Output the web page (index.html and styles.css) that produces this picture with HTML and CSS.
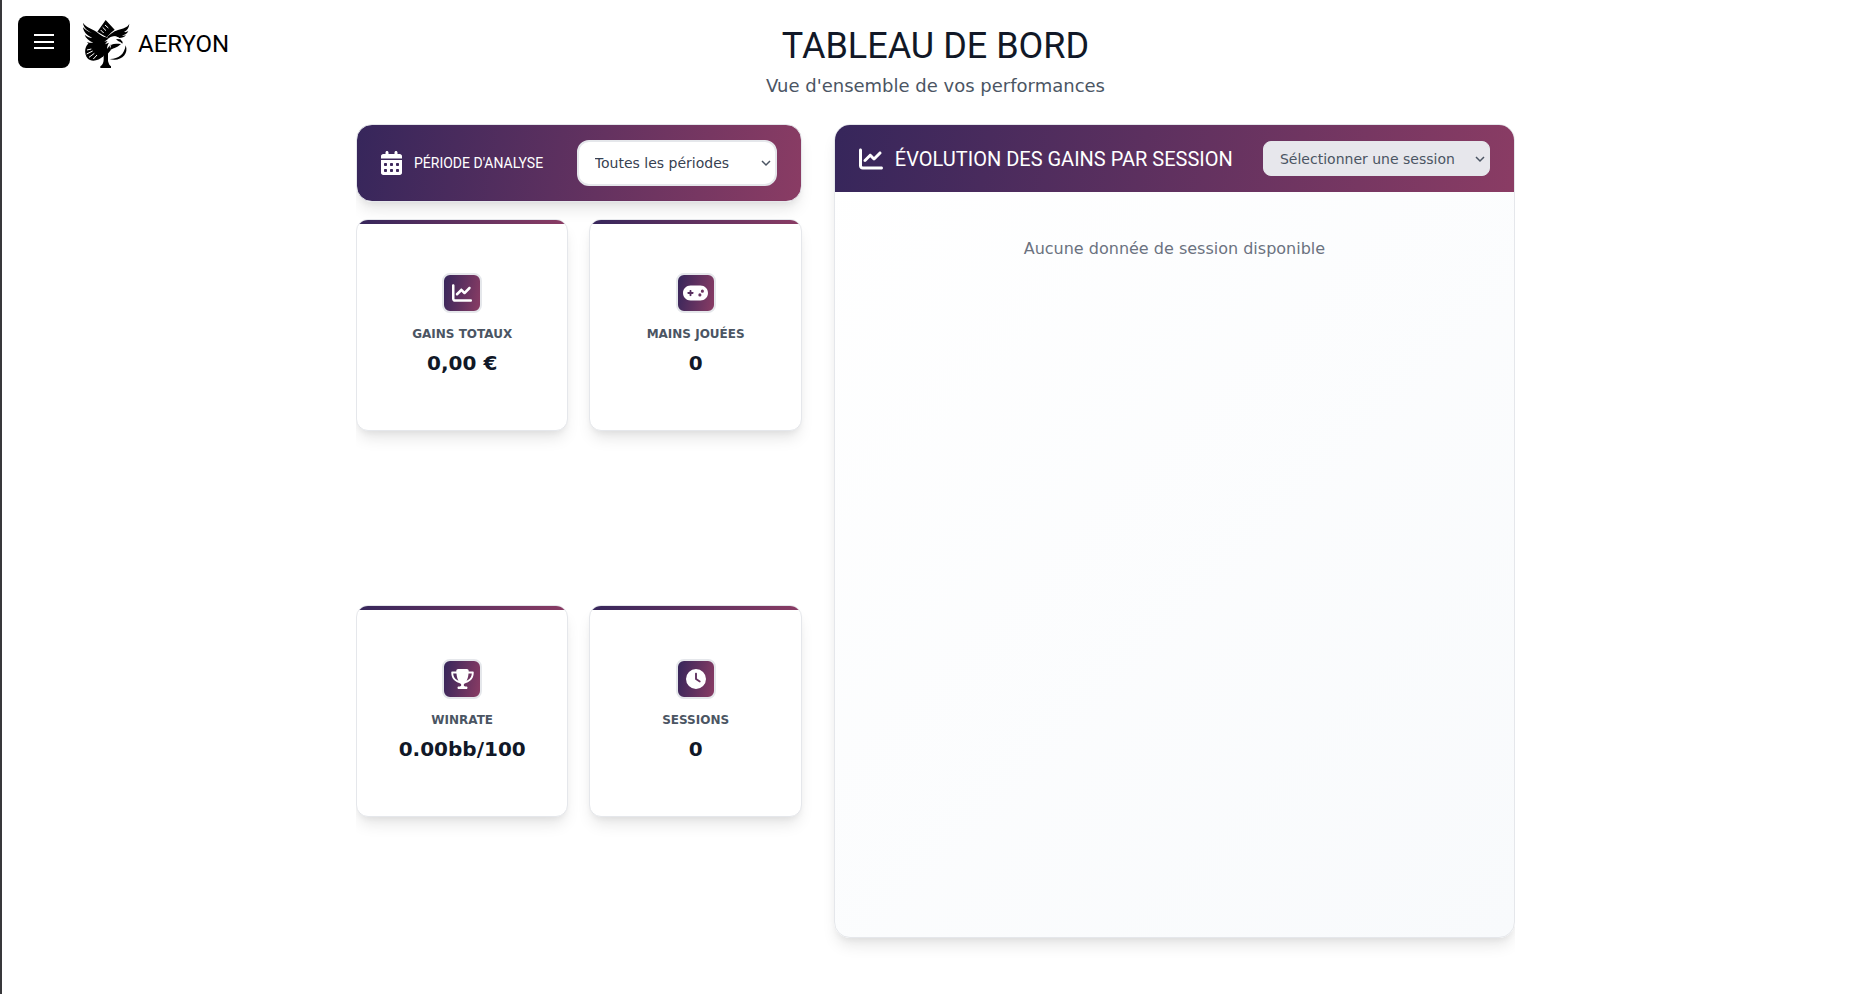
FILE: index.html
```html
<!DOCTYPE html>
<html lang="fr">
<head>
    <meta charset="UTF-8">
    <meta name="viewport" content="width=device-width, initial-scale=1.0">
    <title>Aeryon - Tableau de bord</title>
    <link rel="stylesheet" href="styles.css">
</head>
<body>
    <!-- Shared icons -->
    <svg class="sprite" aria-hidden="true">
        <symbol id="icon-chart" viewBox="0 0 512 512">
            <path d="M64 64c0-17.700-14.300-32-32-32S0 46.300 0 64V400c0 44.200 35.800 80 80 80H480c17.700 0 32-14.300 32-32s-14.300-32-32-32H80c-8.800 0-16-7.200-16-16V64zm406.600 86.600c12.500-12.500 12.500-32.800 0-45.300s-32.800-12.500-45.300 0L320 210.700l-57.400-57.400c-12.500-12.500-32.800-12.500-45.300 0l-112 112c-12.500 12.500-12.500 32.800 0 45.300s32.800 12.500 45.300 0L240 221.300l57.400 57.400c12.500 12.500 32.800 12.500 45.300 0l128-128z"/>
        </symbol>
    </svg>

    <header class="topbar">
        <div class="brand">
            <button class="menu-button" type="button" aria-label="Ouvrir le menu">
                <svg width="24" height="24" viewBox="0 0 24 24" aria-hidden="true">
                    <path d="M2 5h20M2 12h20M2 18h20" fill="none" stroke="#fff" stroke-width="2"/>
                </svg>
            </button>
            <a class="brand-link" href="#">
                <svg class="brand-logo" viewBox="248 60 142 144" aria-hidden="true">
                    <!-- card -->
                    <path d="M318 60L345 89L334 98L321 112L293 95Z"/>
                    <!-- left wing and body -->
                    <path d="M250 68C257 81 276 85 291 96C302 104 309 111 319 112L340 122L330 140L333 151L322 164L296 160L279 146L262 126C270 129 276 129 281 128C268 122 258 114 255 104C263 111 271 113 278 114C261 106 251 95 250 82C258 91 266 96 277 99C260 90 251 81 250 68Z"/>
                    <!-- right wing -->
                    <path d="M321 112C330 104 341 94 355 90C369 85 384 83 389 71C388 84 382 92 373 96C378 97 382 96 386 93C382 102 374 105 367 106C371 108 375 107 379 105C374 112 367 114 359 114C350 107 336 107 327 115Z"/>
                    <!-- left lobe of the spade -->
                    <path d="M268 130C254 139 253 162 263 174C274 187 296 183 311 169L320 157L292 135Z"/>
                    <!-- right lobe -->
                    <path d="M378 136C389 165 360 187 329 177C355 178 374 165 378 136Z"/>
                    <path d="M329 152C337 145 352 144 364 132C352 131 344 130 335 134Z"/>
                    <!-- foot -->
                    <path d="M312 155H325V183C327 191 330 197 334 199V204H302V199C308 195 312 188 312 179Z"/>
                    <!-- head -->
                    <path d="M325 117C337 107 352 107 360 116L370 124L366 128L357 126L348 128C337 128 330 136 322 147C322 139 325 133 328 128L316 133L324 123L314 125Z" fill="#fff"/>
                    <path d="M349 117L362 118L369 126L368 131L362 126L355 123Z"/>
                    <!-- feather and card lines -->
                    <path d="M316 75L326 84M309 82L319 92M303 90L312 99M262 150L275 147M261 162L279 153M268 172L284 160M281 177L292 165" fill="none" stroke="#fff" stroke-width="3"/>
                </svg>
                <span class="brand-name">AERYON</span>
            </a>
        </div>
        <div class="page-heading">
            <h1>TABLEAU DE BORD</h1>
            <p>Vue d'ensemble de vos performances</p>
        </div>
    </header>

    <main class="dashboard">
        <section class="overview">
            <div class="period-bar">
                <svg class="period-icon" viewBox="0 0 448 512" aria-hidden="true">
                    <path d="M128 0c17.700 0 32 14.300 32 32V64H288V32c0-17.700 14.300-32 32-32s32 14.300 32 32V64h48c26.500 0 48 21.500 48 48v48H0V112C0 85.500 21.500 64 48 64H96V32c0-17.700 14.300-32 32-32zM0 192H448V464c0 26.500-21.500 48-48 48H48c-26.500 0-48-21.500-48-48V192zm64 80v32c0 8.800 7.200 16 16 16h32c8.800 0 16-7.200 16-16V272c0-8.800-7.200-16-16-16H80c-8.800 0-16 7.200-16 16zm128 0v32c0 8.800 7.200 16 16 16h32c8.800 0 16-7.200 16-16V272c0-8.800-7.200-16-16-16H208c-8.800 0-16 7.200-16 16zm144-16c-8.800 0-16 7.200-16 16v32c0 8.800 7.200 16 16 16h32c8.800 0 16-7.200 16-16V272c0-8.800-7.200-16-16-16H336zM64 400v32c0 8.800 7.200 16 16 16h32c8.800 0 16-7.200 16-16V400c0-8.800-7.200-16-16-16H80c-8.800 0-16 7.200-16 16zm144-16c-8.800 0-16 7.200-16 16v32c0 8.800 7.200 16 16 16h32c8.800 0 16-7.200 16-16V400c0-8.800-7.200-16-16-16H208zm112 16v32c0 8.800 7.200 16 16 16h32c8.800 0 16-7.200 16-16V400c0-8.800-7.200-16-16-16H336c-8.800 0-16 7.200-16 16z"/>
                </svg>
                <label for="period">PÉRIODE D'ANALYSE</label>
                <select id="period" class="period-select">
                    <option>Toutes les périodes</option>
                </select>
            </div>

            <div class="stats">
                <article class="stat-card">
                    <div class="stat-icon">
                        <svg width="20" height="20" aria-hidden="true"><use href="#icon-chart"/></svg>
                    </div>
                    <h2>GAINS TOTAUX</h2>
                    <p>0,00 €</p>
                </article>
                <article class="stat-card">
                    <div class="stat-icon">
                        <svg width="25" height="20" viewBox="0 0 640 512" aria-hidden="true">
                            <path d="M192 64C86 64 0 150 0 256S86 448 192 448H448c106 0 192-86 192-192s-86-192-192-192H192zM496 168a40 40 0 1 1 0 80 40 40 0 1 1 0-80zM392 304a40 40 0 1 1 80 0 40 40 0 1 1 -80 0zM168 200c0-13.300 10.700-24 24-24s24 10.700 24 24v32h32c13.300 0 24 10.700 24 24s-10.700 24-24 24H216v32c0 13.300-10.700 24-24 24s-24-10.700-24-24V280H136c-13.300 0-24-10.700-24-24s10.700-24 24-24h32V200z"/>
                        </svg>
                    </div>
                    <h2>MAINS JOUÉES</h2>
                    <p>0</p>
                </article>
                <article class="stat-card">
                    <div class="stat-icon">
                        <svg width="23" height="20" viewBox="0 0 576 512" aria-hidden="true">
                            <path d="M400 0H176c-26.500 0-48.100 21.800-47.100 48.200c.2 5.300 .4 10.600 .7 15.800H24C10.700 64 0 74.700 0 88c0 92.600 33.500 157 78.500 200.700c44.300 43.100 98.300 64.800 138.100 75.800c23.400 6.500 39.400 26 39.400 45.600c0 20.900-17 37.900-37.900 37.900H192c-17.700 0-32 14.300-32 32s14.300 32 32 32H384c17.700 0 32-14.300 32-32s-14.300-32-32-32H357.900C337 448 320 431 320 410.100c0-19.600 15.900-39.200 39.400-45.600c39.900-11 93.900-32.700 138.200-75.800C542.500 245 576 180.600 576 88c0-13.300-10.700-24-24-24H446.400c.3-5.200 .5-10.400 .7-15.800C448.100 21.800 426.500 0 400 0zM48.900 112h84.400c9.100 90.100 29.200 150.300 51.900 190.600c-24.900-11-50.800-26.500-73.200-48.300c-32-31.100-58-76-63-142.300zM464.100 254.300c-22.400 21.800-48.300 37.300-73.200 48.300c22.700-40.300 42.800-100.500 51.900-190.600h84.400c-5.100 66.300-31.100 111.200-63 142.300z"/>
                        </svg>
                    </div>
                    <h2>WINRATE</h2>
                    <p>0.00bb/100</p>
                </article>
                <article class="stat-card">
                    <div class="stat-icon">
                        <svg width="20" height="20" viewBox="0 0 512 512" aria-hidden="true">
                            <path d="M256 0a256 256 0 1 1 0 512A256 256 0 1 1 256 0zM232 120V256c0 8 4 15.500 10.700 20l96 64c11 7.400 25.900 4.400 33.300-6.700s4.400-25.900-6.700-33.300L280 243.200V120c0-13.300-10.700-24-24-24s-24 10.700-24 24z"/>
                        </svg>
                    </div>
                    <h2>SESSIONS</h2>
                    <p>0</p>
                </article>
            </div>
        </section>

        <section class="session-panel">
            <div class="panel-header">
                <svg width="24" height="24" aria-hidden="true"><use href="#icon-chart"/></svg>
                <h2>ÉVOLUTION DES GAINS PAR SESSION</h2>
                <select class="session-select" aria-label="Session" disabled>
                    <option>Sélectionner une session</option>
                </select>
            </div>
            <p class="empty-message">Aucune donnée de session disponible</p>
        </section>
    </main>
</body>
</html>
```
FILE: styles.css
```css
:root {
    --font-text: "DejaVu Sans", sans-serif;
    --font-title: Roboto, sans-serif;
    --gradient: linear-gradient(100deg, #36265b 0%, #8a3c64 100%);
    --border: #e5e7eb;
    --shadow: 0 10px 15px -3px rgba(0, 0, 0, 0.1), 0 4px 6px -2px rgba(0, 0, 0, 0.05);
    --chevron: url("data:image/svg+xml,%3Csvg xmlns='http://www.w3.org/2000/svg' width='10' height='8' viewBox='0 0 10 8'%3E%3Cpath d='M1 2l4 4 4-4' fill='none' stroke='%234b5563' stroke-width='1.5'/%3E%3C/svg%3E");
}

* {
    box-sizing: border-box;
}

body {
    margin: 0;
    min-height: 100vh;
    border-left: 2px solid #38383b;
    background: #fff;
    color: #111827;
    font-family: var(--font-text);
}

h1, h2, p {
    margin: 0;
}

svg {
    fill: currentColor;
    flex-shrink: 0;
}

.sprite {
    position: absolute;
    width: 0;
    height: 0;
}

/* Top bar */
.topbar {
    display: grid;
    grid-template-columns: 1fr auto 1fr;
    align-items: start;
    padding: 16px 16px 24px;
}

.brand,
.brand-link {
    display: flex;
    align-items: center;
    gap: 12px;
}

.brand-link {
    gap: 8px;
    padding-top: 4px;
    color: #000;
    text-decoration: none;
}

.menu-button {
    display: flex;
    align-items: center;
    justify-content: center;
    width: 52px;
    height: 52px;
    padding: 0;
    border: none;
    border-radius: 8px;
    background: #000;
    cursor: pointer;
}

.brand-logo {
    width: 48px;
    height: 48px;
}

.brand-name {
    font-family: var(--font-title);
    font-size: 24px;
}

.page-heading {
    padding-top: 6px;
    text-align: center;
}

.page-heading h1 {
    font-family: var(--font-title);
    font-size: 36px;
    font-weight: 400;
    line-height: 48px;
}

.page-heading p {
    margin-top: 2px;
    color: #4b5563;
    font-size: 18px;
    line-height: 28px;
}

/* Dashboard */
.dashboard {
    display: grid;
    grid-template-columns: 36fr 55fr;
    align-items: start;
    gap: 32px;
    max-width: 1159px;
    margin: 0 auto;
    overflow: hidden;
}

.overview {
    display: flex;
    flex-direction: column;
    gap: 17px;
    min-height: calc(100vh - 148px);
}

.period-bar {
    display: flex;
    align-items: center;
    gap: 12px;
    padding: 15px 24px;
    border: 1px solid var(--border);
    border-radius: 16px;
    background: var(--gradient) border-box;
    box-shadow: var(--shadow);
    color: #fff;
}

.period-icon {
    width: 21px;
    height: 24px;
}

.period-bar label {
    font-family: var(--font-title);
    font-size: 14px;
    white-space: nowrap;
}

.period-select,
.session-select {
    margin-left: auto;
    padding: 0 16px;
    appearance: none;
    font-family: var(--font-text);
    font-size: 14px;
}

.period-select {
    width: 200px;
    height: 46px;
    border: 2px solid var(--border);
    border-radius: 12px;
    background: #fff var(--chevron) no-repeat right 4px center;
    color: #374151;
}

.stats {
    display: grid;
    flex: 1;
    grid-template-columns: 1fr 1fr;
    grid-template-rows: 1fr 1fr;
    align-items: start;
    gap: 21px;
}

.stat-card {
    position: relative;
    display: flex;
    flex-direction: column;
    align-items: center;
    justify-content: center;
    aspect-ratio: 1;
    border: 1px solid var(--border);
    border-radius: 12px;
    background: #fff;
    box-shadow: var(--shadow);
    overflow: hidden;
}

.stat-card::before {
    content: "";
    position: absolute;
    top: 0;
    left: 0;
    right: 0;
    height: 4px;
    background: var(--gradient);
}

.stat-icon {
    display: flex;
    align-items: center;
    justify-content: center;
    width: 40px;
    height: 40px;
    margin-bottom: 12px;
    border: 2px solid var(--border);
    border-radius: 8px;
    background: var(--gradient);
    color: #fff;
}

.stat-card h2 {
    margin-bottom: 6px;
    color: #4b5563;
    font-size: 12px;
    line-height: 18px;
}

.stat-card p {
    font-size: 20px;
    font-weight: 700;
    line-height: 28px;
}

/* Session chart */
.session-panel {
    min-height: calc(100vh - 180px);
    border: 1px solid var(--border);
    border-radius: 16px;
    background: linear-gradient(135deg, #fff 0%, #f8fafc 100%);
    box-shadow: var(--shadow);
    overflow: hidden;
}

.panel-header {
    display: flex;
    align-items: center;
    gap: 12px;
    padding: 16px 24px;
    background: var(--gradient);
    color: #fff;
}

.panel-header h2 {
    font-family: var(--font-title);
    font-size: 20px;
    font-weight: 400;
    line-height: 32px;
    white-space: nowrap;
}

.session-select {
    width: 227px;
    height: 35px;
    border: 1px solid var(--border);
    border-radius: 8px;
    background: #e7e7ec var(--chevron) no-repeat right 4px center;
    color: #4b5563;
    opacity: 1;
}

.empty-message {
    padding: 45px 24px;
    color: #6b7280;
    font-size: 16px;
    line-height: 24px;
    text-align: center;
}

@media (max-width: 1100px) {
    .topbar,
    .dashboard {
        grid-template-columns: 1fr;
    }

    .dashboard {
        margin: 0 16px;
    }

    .panel-header {
        flex-wrap: wrap;
    }
}
```
